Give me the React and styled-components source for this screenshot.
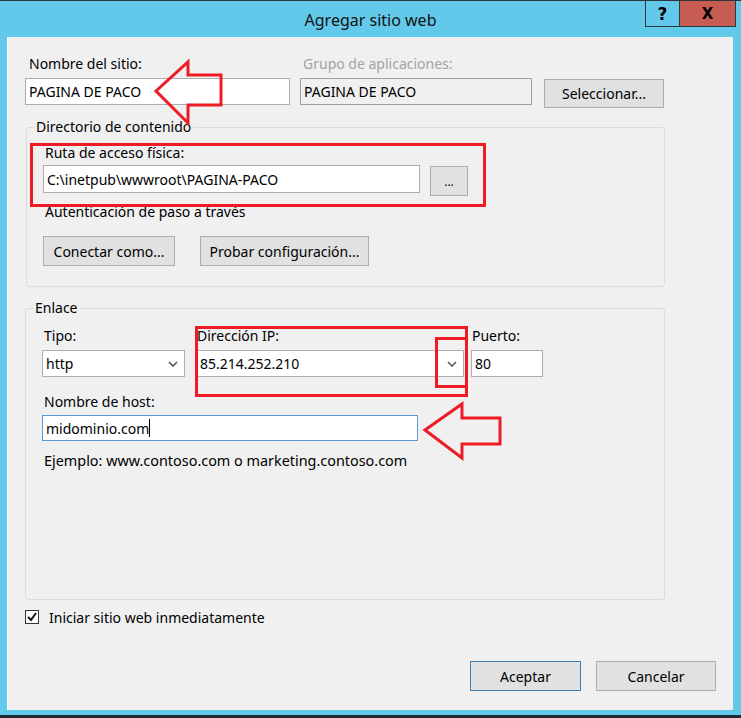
import React from 'react'
import styled, { createGlobalStyle } from 'styled-components'

const GlobalStyle = createGlobalStyle`
  html, body {
    margin: 0;
    padding: 0;
    background: #63c9ea;
  }
  body {
    font-family: "Noto Sans", "Open Sans", sans-serif;
    font-size: 14px;
    color: #000;
  }
  * {
    box-sizing: border-box;
  }
`

const Window = styled.div`
  position: relative;
  width: 741px;
  height: 718px;
  background: #63c9ea;
  border-top: 1px solid #2e3438;
  border-bottom: 3px solid #1d2a31;
  display: flex;
  flex-direction: column;
`

const TitleBar = styled.div`
  height: 36px;
  display: grid;
  grid-template-columns: 96px 1fr 96px;
`

const Title = styled.div`
  grid-column: 2;
  align-self: center;
  text-align: center;
  font-size: 16px;
  color: #111;
  padding-top: 1px;
`

const Controls = styled.div`
  grid-column: 3;
  display: flex;
  height: 26px;
  border: 1px solid #2b3a41;
  border-top: none;
  width: 91px;
`

const HelpButton = styled.div`
  width: 34px;
  display: flex;
  align-items: center;
  justify-content: center;
  font-family: "DejaVu Sans", sans-serif;
  font-weight: bold;
  font-size: 17px;
  border-right: 1px solid #2b3a41;
`

const CloseButton = styled.div`
  flex: 1;
  background: #c75c52;
  display: flex;
  align-items: center;
  justify-content: center;
  font-family: "DejaVu Sans", sans-serif;
  font-weight: bold;
  font-size: 15px;
`

const Client = styled.div`
  height: 673px;
  margin: 0 8px 0 7px;
  background: #f0f0f0;
  box-shadow: inset 1px 0 0 #ffffff;
  padding: 18px 17px 0 18px;
  display: flex;
  flex-direction: column;
`

const Row = styled.div`
  display: flex;
  align-items: flex-start;
  gap: ${p => p.$gap || 0}px;
`

const Field = styled.div`
  display: flex;
  flex-direction: column;
  width: ${p => p.$width}px;
  margin-right: ${p => p.$mr || 0}px;
`

const Label = styled.div`
  line-height: 18px;
  height: 18px;
  padding-left: ${p => p.$pl ?? 2}px;
  margin-bottom: ${p => p.$mb ?? 5}px;
  color: ${p => (p.$disabled ? '#a3a3a3' : '#000')};
  white-space: nowrap;
`

const Input = styled.div`
  height: ${p => p.$h || 27}px;
  width: ${p => (p.$width ? `${p.$width}px` : '100%')};
  border: 1px solid ${p => (p.$focus ? '#5b9bd5' : p.$disabled ? '#a0a0a0' : '#abadb3')};
  background: ${p => (p.$disabled ? '#f0f0f0' : '#fff')};
  display: flex;
  align-items: center;
  padding: 0 4px 0 3px;
  white-space: nowrap;
`

const Caret = styled.span`
  display: inline-block;
  width: 1px;
  height: 18px;
  background: #000;
`

const Select = styled(Input)`
  justify-content: space-between;
  padding-right: 6px;
`

const Button = styled.div`
  width: ${p => p.$width}px;
  height: ${p => p.$h || 30}px;
  margin-top: ${p => p.$mt || 0}px;
  background: #e1e1e1;
  border: 1px solid ${p => (p.$default ? '#3c7fb1' : '#adadad')};
  display: flex;
  align-items: center;
  justify-content: center;
  white-space: nowrap;
  font-size: ${p => p.$fs || 14}px;
`

const Group = styled.fieldset`
  margin: ${p => p.$mt}px 0 0 ${p => p.$ml || 0}px;
  width: ${p => p.$width}px;
  border: 1px solid #d9dde0;
  border-radius: 3px;
  padding: ${p => p.$pt}px 0 ${p => p.$pb}px 16px;
  min-inline-size: 0;
`

const Legend = styled.legend`
  margin-left: -9px;
  padding: 0 2px;
  line-height: 18px;
  height: 18px;
`

const Note = styled.div`
  line-height: 18px;
  padding-left: 2px;
  margin-top: ${p => p.$mt}px;
  font-size: ${p => p.$fs || 14}px;
`

const CheckRow = styled.label`
  display: flex;
  align-items: center;
  gap: 10px;
  height: 18px;
  margin-top: 8px;
`

const CheckBox = styled.span`
  width: 14px;
  height: 14px;
  border: 1px solid #333;
  background: #fff;
  display: flex;
  align-items: center;
  justify-content: center;
`

const Footer = styled.div`
  display: flex;
  justify-content: flex-end;
  gap: 15px;
  margin-top: 35px;
`

const Overlay = styled.svg`
  position: absolute;
  top: 0;
  left: 0;
  pointer-events: none;
`

const Chevron = () => (
  <svg width="10" height="6" viewBox="0 0 10 6">
    <polyline points="1,1 5,5 9,1" fill="none" stroke="#555" strokeWidth="1.6" />
  </svg>
)

const Annotations = () => (
  <Overlay width="741" height="718" viewBox="0 0 741 718">
    <g fill="none" stroke="#ed1c24" strokeWidth="3">
      <polygon points="156,90 188,61 188,74 221,74 221,104 188,104 188,122" />
      <polygon points="425,429 462,403 462,417 500,417 500,443 462,443 462,457" />
      <rect x="31.5" y="143.5" width="453" height="61" />
      <rect x="196.5" y="326.5" width="270" height="68" />
      <rect x="436.5" y="337.5" width="30" height="48" />
    </g>
  </Overlay>
)

export default function App() {
  return (
    <>
      <GlobalStyle />
      <Window>
        <TitleBar>
          <Title>Agregar sitio web</Title>
          <Controls>
            <HelpButton>?</HelpButton>
            <CloseButton>X</CloseButton>
          </Controls>
        </TitleBar>
        <Client>
          <Row>
            <Field $width={265} $mr={10}>
              <Label $pl={4}>Nombre del sitio:</Label>
              <Input>PAGINA DE PACO</Input>
            </Field>
            <Field $width={232} $mr={12}>
              <Label $pl={3} $disabled>Grupo de aplicaciones:</Label>
              <Input $disabled>PAGINA DE PACO</Input>
            </Field>
            <Button $width={120} $h={29} $mt={24}>Seleccionar...</Button>
          </Row>

          <Group $mt={10} $ml={1} $width={639} $pt={8} $pb={20}>
            <Legend>Directorio de contenido</Legend>
            <Label $mb={3}>Ruta de acceso física:</Label>
            <Row $gap={10}>
              <Input $width={377} $h={28}>C:\inetpub\wwwroot\PAGINA-PACO</Input>
              <Button $width={38} $mt={1} $fs={12}>...</Button>
            </Row>
            <Note $mt={7}>Autenticación de paso a través</Note>
            <Row $gap={25} style={{ marginTop: 15 }}>
              <Button $width={132}>Conectar como...</Button>
              <Button $width={169}>Probar configuración...</Button>
            </Row>
          </Group>

          <Group $mt={12} $width={640} $pt={10} $pb={129}>
            <Legend>Enlace</Legend>
            <Row>
              <Field $width={143} $mr={11}>
                <Label>Tipo:</Label>
                <Select>
                  <span>http</span>
                  <Chevron />
                </Select>
              </Field>
              <Field $width={268} $mr={7}>
                <Label $pl={1}>Dirección IP:</Label>
                <Select>
                  <span>85.214.252.210</span>
                  <Chevron />
                </Select>
              </Field>
              <Field $width={72}>
                <Label $pl={1}>Puerto:</Label>
                <Input>80</Input>
              </Field>
            </Row>
            <Note $mt={16}>Nombre de host:</Note>
            <Input $width={376} $h={26} $focus style={{ marginTop: 4 }}>
              midominio.com<Caret />
            </Input>
            <Note $mt={11} $fs={14.4}>Ejemplo: www.contoso.com o marketing.contoso.com</Note>
          </Group>

          <CheckRow>
            <CheckBox>
              <svg width="10" height="10" viewBox="0 0 10 10">
                <polyline points="1,5 4,8 9,1" fill="none" stroke="#111" strokeWidth="2" />
              </svg>
            </CheckBox>
            <span>Iniciar sitio web inmediatamente</span>
          </CheckRow>

          <Footer>
            <Button $width={111} $default>Aceptar</Button>
            <Button $width={120}>Cancelar</Button>
          </Footer>
        </Client>
        <Annotations />
      </Window>
    </>
  )
}
